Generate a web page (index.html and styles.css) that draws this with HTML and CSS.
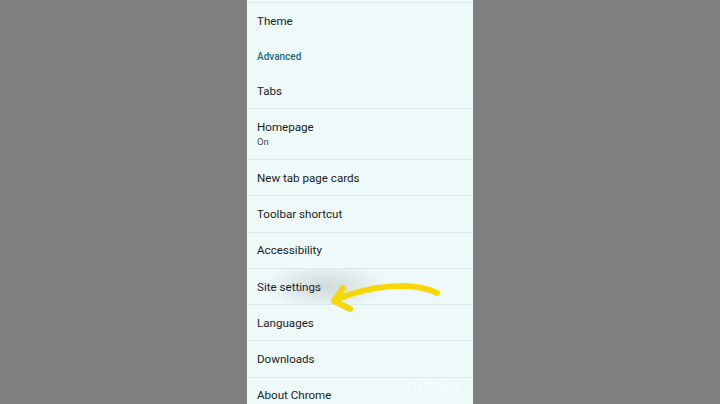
FILE: index.html
```html
<!DOCTYPE html>
<html>
<head>
<meta charset="utf-8">
<link rel="stylesheet" href="styles.css">
</head>
<body>
<div class="panel">
  <div class="top-rule"></div>
  <div class="row row-theme"><span class="title">Theme</span></div>
  <div class="section"><span>Advanced</span></div>
  <div class="row row-tabs bordered"><span class="title">Tabs</span></div>
  <div class="row row-two bordered">
    <span class="title">Homepage</span>
    <span class="sub">On</span>
  </div>
  <div class="row bordered"><span class="title">New tab page cards</span></div>
  <div class="row bordered"><span class="title">Toolbar shortcut</span></div>
  <div class="row bordered"><span class="title">Accessibility</span></div>
  <div class="row bordered pressed"><span class="title">Site settings</span></div>
  <div class="row bordered"><span class="title">Languages</span></div>
  <div class="row bordered"><span class="title">Downloads</span></div>
  <div class="row bordered"><span class="title">About Chrome</span></div>

  <svg class="arrow" width="226" height="404" viewBox="0 0 226 404">
    <path d="M190 293 C 168 282, 125 284, 88 300" fill="none" stroke="#f6d808" stroke-width="6" stroke-linecap="round"/>
    <path d="M96 288 L 87 301 L 103 309" fill="none" stroke="#f6d808" stroke-width="6" stroke-linecap="round" stroke-linejoin="round"/>
  </svg>
  <div class="watermark">InShot</div>
</div>
</body>
</html>
```
FILE: styles.css
```css
html, body {
  margin: 0;
  padding: 0;
}
body {
  width: 720px;
  height: 404px;
  overflow: hidden;
  background: #7e807f;
  display: flex;
  justify-content: center;
  font-family: Roboto, "Noto Sans", sans-serif;
}
.panel {
  position: relative;
  width: 226px;
  height: 404px;
  background: #eef9fa;
  overflow: hidden;
  display: flex;
  flex-direction: column;
  flex: none;
}
.top-rule {
  height: 2px;
  border-bottom: 1px solid #dde8ea;
  flex: none;
}
.row {
  flex: none;
  display: flex;
  flex-direction: column;
  justify-content: center;
  padding-left: 10px;
  height: 35.3px;
}
.bordered {
  border-bottom: 1px solid #dde8ea;
}
.row-theme {
  height: 36px;
}
.row-tabs {
  height: 35px;
}
.row-two {
  height: 50px;
}
.title {
  font-size: 11.6px;
  color: #1b1d1e;
  line-height: 14px;
}
.sub {
  font-size: 9.5px;
  color: #4a4d4f;
  line-height: 13px;
  margin-top: 1px;
}
.section {
  flex: none;
  height: 34px;
  display: flex;
  align-items: center;
  padding-left: 10px;
  font-size: 10px;
  font-weight: 500;
  color: #1f6b7e;
}
.pressed {
  background: radial-gradient(ellipse 62px 24px at 78px 17px, rgba(120,125,128,0.26), rgba(120,125,128,0) 100%);
}
.arrow {
  position: absolute;
  left: 0;
  top: 0;
}
.watermark {
  position: absolute;
  left: 160px;
  top: 377px;
  font-family: Roboto, sans-serif;
  font-size: 17px;
  font-weight: 700;
  color: rgba(255,255,255,0.4);
  letter-spacing: 0.5px;
}
```
